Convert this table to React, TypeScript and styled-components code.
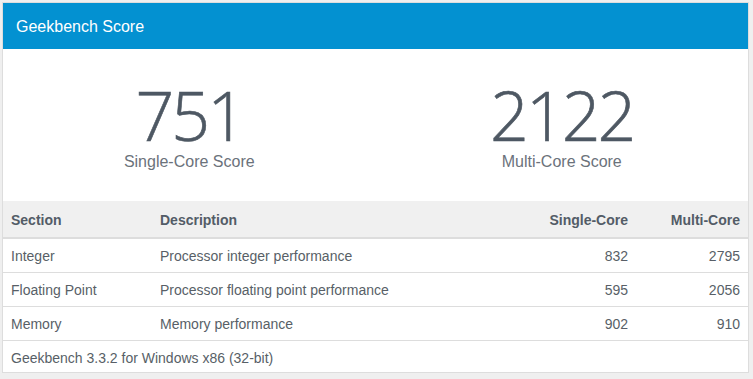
import React from 'react';
import styled, { createGlobalStyle } from 'styled-components';

interface benchRow {
  section: string,
  description: string,
  single: number,
  multi: number
}

const ROWS: benchRow[] = [
  { section: 'Integer', description: 'Processor integer performance', single: 832, multi: 2795 },
  { section: 'Floating Point', description: 'Processor floating point performance', single: 595, multi: 2056 },
  { section: 'Memory', description: 'Memory performance', single: 902, multi: 910 },
];

const App: React.FC = () => {
  return (
    <>
      <GlobalStyle />
      <Card>
        <Heading>Geekbench Score</Heading>
        <Scores>
          <ScoreBox>
            <ScoreNum>751</ScoreNum>
            <ScoreLabel>Single-Core Score</ScoreLabel>
          </ScoreBox>
          <ScoreBox>
            <ScoreNum>2122</ScoreNum>
            <ScoreLabel>Multi-Core Score</ScoreLabel>
          </ScoreBox>
        </Scores>
        <Table>
          <colgroup>
            <col style={{ width: 149 }} />
            <col />
            <col style={{ width: 130 }} />
            <col style={{ width: 112 }} />
          </colgroup>
          <thead>
            <tr>
              <Th>Section</Th>
              <Th>Description</Th>
              <Th $right>Single-Core</Th>
              <Th $right>Multi-Core</Th>
            </tr>
          </thead>
          <tbody>
            {ROWS.map((row) => (
              <tr key={row.section}>
                <Td>{row.section}</Td>
                <Td>{row.description}</Td>
                <Td $right>{row.single}</Td>
                <Td $right>{row.multi}</Td>
              </tr>
            ))}
            <tr>
              <Td colSpan={4}>Geekbench 3.3.2 for Windows x86 (32-bit)</Td>
            </tr>
          </tbody>
        </Table>
      </Card>
    </>
  );
};

const GlobalStyle = createGlobalStyle`
  html, body {
    margin: 0;
    padding: 0;
    background: #efefef;
    font-family: 'Liberation Sans', Arial, sans-serif;
  }
`;
const Card = styled.div`
  margin: 2px 4px 0 2px;
  background: #ffffff;
  border: 1px solid #dddddd;
  height: 371px;
  box-sizing: border-box;
`;
const Heading = styled.div`
  height: 46px;
  display: flex;
  align-items: center;
  padding: 1px 13px 0;
  background: #0391d1;
  color: #ffffff;
  font-size: 16px;
  box-sizing: border-box;
`;
const Scores = styled.div`
  display: grid;
  grid-template-columns: 1fr 1fr;
  height: 152px;
`;
const ScoreBox = styled.div`
  display: flex;
  flex-direction: column;
  align-items: center;
  padding-top: 20px;
`;
const ScoreNum = styled.div`
  font-family: 'Open Sans', sans-serif;
  font-weight: 300;
  font-size: 68px;
  line-height: 92px;
  letter-spacing: -3px;
  color: #4e5863;
  -webkit-text-stroke: 0.6px #4e5863;
`;
const ScoreLabel = styled.div`
  margin-top: -8px;
  font-size: 16px;
  line-height: 18px;
  color: #6b727b;
`;
const Table = styled.table`
  width: 100%;
  border-collapse: collapse;
  table-layout: fixed;
  font-size: 14px;
`;
const Th = styled.th<{ $right?: boolean }>`
  height: 37px;
  padding: 1px 8px 0;
  background: #f0f0f0;
  border-bottom: 2px solid #dddddd;
  text-align: ${(p) => (p.$right ? 'right' : 'left')};
  color: #535c67;
  font-weight: bold;
  box-sizing: border-box;
`;
const Td = styled.td<{ $right?: boolean }>`
  height: 34px;
  padding: 1px 8px 0;
  border-bottom: 1px solid #dddddd;
  text-align: ${(p) => (p.$right ? 'right' : 'left')};
  color: #585f67;
  box-sizing: border-box;
  tr:last-child > & {
    border-bottom: none;
  }
`;

export default App;
